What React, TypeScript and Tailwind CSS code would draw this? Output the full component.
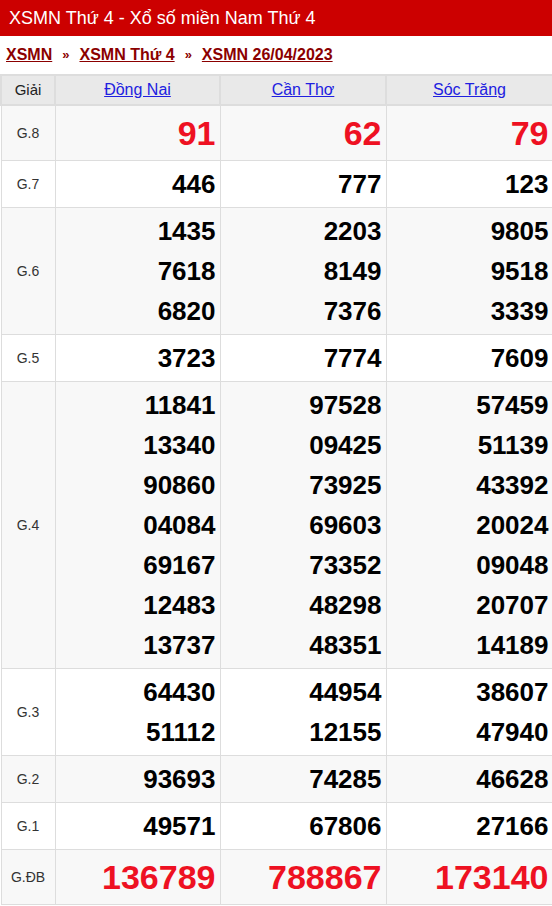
import React from "react";

type Row = { label: string; values: string[][]; red?: boolean };

const provinces = ["Đồng Nai", "Cần Thơ", "Sóc Trăng"];

const rows: Row[] = [
  { label: "G.8", values: [["91"], ["62"], ["79"]], red: true },
  { label: "G.7", values: [["446"], ["777"], ["123"]] },
  {
    label: "G.6",
    values: [
      ["1435", "7618", "6820"],
      ["2203", "8149", "7376"],
      ["9805", "9518", "3339"],
    ],
  },
  { label: "G.5", values: [["3723"], ["7774"], ["7609"]] },
  {
    label: "G.4",
    values: [
      ["11841", "13340", "90860", "04084", "69167", "12483", "13737"],
      ["97528", "09425", "73925", "69603", "73352", "48298", "48351"],
      ["57459", "51139", "43392", "20024", "09048", "20707", "14189"],
    ],
  },
  {
    label: "G.3",
    values: [
      ["64430", "51112"],
      ["44954", "12155"],
      ["38607", "47940"],
    ],
  },
  { label: "G.2", values: [["93693"], ["74285"], ["46628"]] },
  { label: "G.1", values: [["49571"], ["67806"], ["27166"]] },
  { label: "G.ĐB", values: [["136789"], ["788867"], ["173140"]], red: true },
];

export default function App() {
  return (
    <div className="w-[552px] bg-white font-['Liberation_Sans',Arial,sans-serif]">
      <div className="h-9 bg-[#cc0000] pl-[9px] flex items-center text-white text-[18px] leading-none">
        XSMN Thứ 4 - Xổ số miền Nam Thứ 4
      </div>

      <div className="h-[38px] flex items-center px-[6px] text-[16px] font-bold text-[#8b0000]">
        <a className="underline">XSMN</a>
        <span className="mx-[10px] text-[13px]">»</span>
        <a className="underline">XSMN Thứ 4</a>
        <span className="mx-[10px] text-[13px]">»</span>
        <a className="underline">XSMN 26/04/2023</a>
      </div>

      <table className="w-[552px] border-collapse table-fixed">
        <colgroup>
          <col className="w-[54px]" />
          <col className="w-[165px]" />
          <col className="w-[166px]" />
          <col className="w-[167px]" />
        </colgroup>
        <thead>
          <tr className="h-[30px] bg-[#e9e9e9]">
            <th className="border-2 border-[#dddddd] text-[15px] font-normal text-[#222]">Giải</th>
            {provinces.map((p) => (
              <th key={p} className="border-2 border-[#dddddd] text-[16px] font-normal">
                <a className="text-[#2020e0] underline">{p}</a>
              </th>
            ))}
          </tr>
        </thead>
        <tbody>
          {rows.map((row, i) => (
            <tr key={row.label} className={i % 2 === 0 ? "bg-[#f8f8f8]" : "bg-white"}>
              <td className="border border-[#dddddd] text-center text-[14px] text-[#333]">{row.label}</td>
              {row.values.map((col, j) => (
                <td key={j} className="border border-[#dddddd] text-right pr-[4px] py-[3px]">
                  {col.map((n) => (
                    <div
                      key={n}
                      className={
                        row.red
                          ? "h-12 leading-[48px] text-[34px] font-bold text-[#ee1122]"
                          : "h-10 leading-[40px] text-[26px] font-bold text-black"
                      }
                    >
                      {n}
                    </div>
                  ))}
                </td>
              ))}
            </tr>
          ))}
        </tbody>
      </table>
    </div>
  );
}
